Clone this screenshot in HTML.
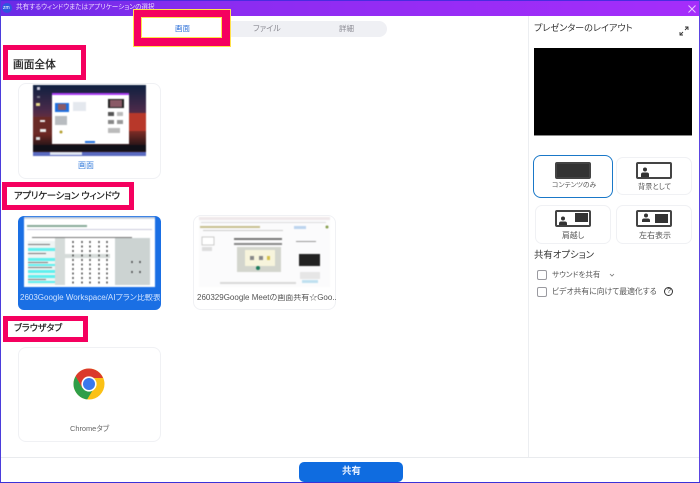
<!DOCTYPE html>
<html lang="ja"><head><meta charset="utf-8"><style>
*{box-sizing:border-box}
html,body{margin:0;padding:0}
body{width:700px;height:483px;position:relative;overflow:hidden;background:#fff;font-family:"Liberation Sans","Noto Sans CJK JP",sans-serif;color:#222;font-feature-settings:"palt" 1}
.a{position:absolute}
.t{position:absolute;white-space:nowrap;line-height:1}
.card{position:absolute;border:1px solid #f0f1f4;border-radius:8px;background:#fff}
.pink{position:absolute;border:5px solid #f5005f;background:#fff}
.lay{position:absolute;border:1px solid #f0f1f4;border-radius:7px;background:#fff}
.mon{position:absolute;width:36px;height:17px;border:2px solid #444;border-radius:2px;background:#fff}
.chk{position:absolute;left:537px;width:10px;height:10px;border:1px solid #9a9aa0;border-radius:2px;background:#fff}
.h{-webkit-text-stroke:.25px #222}
.b{filter:blur(.4px)}
</style></head><body>
<!-- title -->
<div class="a" style="left:0;top:0;width:700px;height:16px;background:linear-gradient(90deg,#6a2be6 0%,#8a2cf0 30%,#a52dfb 100%)"></div>
<div class="a" style="left:0;top:0;width:700px;height:1px;background:#4a2be0"></div>
<div class="a" style="left:2px;top:3px;width:10px;height:10px;border-radius:50%;background:#2d55e0"></div>
<div class="t" style="left:3px;top:6px;font-size:5px;color:#fff">zm</div>
<div class="t" style="left:16px;top:5px;font-size:6.6px;color:#ecdcff">共有するウィンドウまたはアプリケーションの選択</div>
<svg class="a" style="left:688px;top:5px" width="8" height="8"><path d="M.5 .5L7.5 7.5M7.5 .5L.5 7.5" stroke="#e9c8ff" stroke-width="1"/></svg>
<!-- frame -->
<div class="a" style="left:0;top:0;width:1px;height:483px;background:#4b3ddc"></div>
<div class="a" style="left:699px;top:0;width:1px;height:483px;background:#5b45e0"></div>
<div class="a" style="left:0;top:482px;width:700px;height:1px;background:#3a32d8"></div>
<!-- tabs -->
<div class="a" style="left:200px;top:21px;width:187px;height:16px;border-radius:8px;background:#eff0f4"></div>
<div class="t" style="left:253px;top:25px;font-size:8px;color:#8a8a92">ファイル</div>
<div class="t" style="left:339px;top:25px;font-size:7.5px;color:#8a8a92">詳細</div>
<div class="a" style="left:133px;top:9px;width:98px;height:38px;background:#f5005f;border:1px solid #ffe14a"></div>
<div class="a" style="left:141px;top:17px;width:81px;height:21px;background:#fff;border:1px solid #ffe14a"></div>
<div class="t" style="left:175px;top:25px;font-size:7.5px;color:#2f72d8">画面</div>
<!-- left/right divider -->
<div class="a" style="left:528px;top:16px;width:1px;height:442px;background:#eceef1"></div>
<!-- section 1 -->
<div class="pink" style="left:3px;top:45px;width:83px;height:35px"></div>
<div class="t h" style="left:13px;top:60px;font-size:10.7px;color:#222">画面全体</div>
<div class="card" style="left:18px;top:83px;width:143px;height:96px"></div>
<svg class="a b" style="left:33px;top:85px" width="113" height="71">
<defs><linearGradient id="g" x1="0" y1="0" x2="0" y2="1"><stop offset="0" stop-color="#0e2040"/><stop offset=".35" stop-color="#4a2a4a"/><stop offset=".62" stop-color="#8a3028"/><stop offset=".85" stop-color="#2a1518"/></linearGradient></defs>
<rect width="113" height="71" fill="url(#g)"/>
<rect x="96" y="28" width="17" height="18" fill="#b8382a"/>
<rect x="0" y="32" width="19" height="16" fill="#6a2a26"/>
<rect x="0" y="60" width="113" height="6" fill="#101018"/>
<rect x="0" y="67" width="113" height="4" fill="#5a6ac0"/>
<rect x="17" y="67" width="32" height="3" fill="#dfe6f2"/>
<rect x="4" y="2" width="3" height="3" fill="#ccd"/><rect x="4" y="11" width="3" height="2" fill="#778"/><rect x="3" y="18" width="4" height="3" fill="#e8d98a"/><rect x="7" y="35" width="5" height="2" fill="#eee"/><rect x="7" y="44" width="6" height="3" fill="#eee"/><rect x="3" y="52" width="4" height="3" fill="#ddd"/>
<rect x="19" y="8" width="77" height="51" fill="#fff"/><rect x="19" y="8" width="77" height="2" fill="#a83cf0"/>
<rect x="22" y="18" width="14" height="9" fill="#1f6fe0"/><rect x="25" y="19" width="8" height="6" fill="#8a5a66"/>
<rect x="40" y="17" width="13" height="9" fill="#e4e8ee"/>
<rect x="22" y="31" width="12" height="9" fill="#b8bcc0"/><circle cx="28" cy="47" r="1.5" fill="#b5a030"/>
<rect x="75" y="14" width="16" height="9" fill="#222"/><rect x="77" y="15" width="12" height="7" fill="#8a5a66"/>
<rect x="75" y="27" width="6" height="4" fill="#555"/><rect x="84" y="27" width="6" height="4" fill="#bbb"/><rect x="75" y="35" width="6" height="4" fill="#888"/><rect x="84" y="35" width="6" height="4" fill="#999"/><rect x="75" y="43" width="12" height="5" fill="#bbb"/>
<rect x="52" y="56" width="10" height="2" fill="#1f6fe0"/>
</svg>
<div class="t" style="left:78px;top:162px;font-size:8px;color:#3a7fdc">画面</div>
<!-- section 2 -->
<div class="pink" style="left:2px;top:182px;width:132px;height:28px"></div>
<div class="t h" style="left:14px;top:191px;font-size:9.4px;letter-spacing:-.25px;color:#222">アプリケーション ウィンドウ</div>
<div class="a" style="left:18px;top:216px;width:143px;height:94px;background:#1a6fe4;border-radius:6px"></div>
<svg class="a b" style="left:24px;top:217px" width="131" height="70">
<rect width="131" height="70" fill="#fff"/>
<rect width="131" height="2" fill="#cfd6e0"/><rect x="3" y="8" width="60" height="2" fill="#8a9"/><rect x="3" y="12" width="125" height="1" fill="#ccd"/>
<rect x="4" y="24" width="27" height="44" fill="#eef4f4"/>
<rect x="4" y="31" width="27" height="3" fill="#5ff0ee"/><rect x="4" y="41" width="27" height="3" fill="#5ff0ee"/><rect x="4" y="47" width="27" height="2" fill="#5ff0ee"/><rect x="4" y="53" width="27" height="3" fill="#5ff0ee"/><rect x="4" y="58" width="27" height="3" fill="#5ff0ee"/><rect x="4" y="64" width="27" height="2" fill="#5ff0ee"/>
<rect x="31" y="21" width="10" height="47" fill="#d5dbd9"/><rect x="41" y="37" width="45" height="4" fill="#d5dbd9"/>
<rect x="91" y="21" width="35" height="47" fill="#ccd3d2"/>
<g stroke="#333" stroke-width="1.3" stroke-dasharray="2 2.5"><path d="M49 24V67M58 24V67M66 24V67M75 24V67M83 24V67"/><path d="M108 44V48M116 44V48M108 54V58M116 54V58"/></g>
<g fill="#777"><rect x="8" y="20" width="100" height="1"/><rect x="4" y="27" width="22" height="1"/><rect x="4" y="36" width="18" height="1"/><rect x="4" y="45" width="20" height="1"/><rect x="4" y="50" width="24" height="1"/><rect x="4" y="62" width="18" height="1"/></g>
</svg>
<div class="t" style="left:20px;top:294px;font-size:8px;color:#cfe2ff;width:140px;overflow:hidden">2603Google Workspace/AIプラン比較表...</div>
<div class="card" style="left:193px;top:215px;width:143px;height:95px"></div>
<svg class="a b" style="left:199px;top:217px" width="131" height="70">
<rect width="131" height="70" fill="#fbfbfc"/>
<rect width="131" height="3" fill="#efe8ea"/><rect x="2" y="5" width="125" height="1" fill="#ddd"/>
<rect x="1" y="9" width="60" height="2" fill="#c8c090"/><rect x="95" y="9" width="12" height="3" fill="#bcd4ee"/><circle cx="128" cy="10" r="1.5" fill="#88a050"/>
<rect x="4" y="13" width="80" height="1" fill="#ccc"/>
<rect x="3" y="20" width="12" height="8" fill="#fff" stroke="#ccc"/><rect x="3" y="30" width="10" height="4" fill="#ddd"/>
<rect x="35" y="21" width="48" height="2" fill="#777"/><rect x="35" y="26" width="48" height="2" fill="#888"/>
<rect x="38" y="30" width="44" height="25" fill="#d3d5cd"/><rect x="46" y="33" width="30" height="16" fill="#f7f4dc"/>
<rect x="51" y="39" width="4" height="4" fill="#888"/><rect x="60" y="39" width="4" height="4" fill="#888"/><rect x="68" y="39" width="3" height="4" fill="#d4c04a"/>
<circle cx="59" cy="51" r="2" fill="#1a7a5a"/>
<rect x="100" y="37" width="21" height="12" fill="#222"/><rect x="97" y="24" width="20" height="1" fill="#999"/><rect x="101" y="55" width="20" height="7" fill="#e6e6e6"/><rect x="103" y="63" width="16" height="3" fill="#bfe0f0"/>
<rect x="21" y="65" width="76" height="2" fill="#d8d8d8"/>
</svg>
<div class="t" style="left:197px;top:294px;font-size:8px;color:#555;width:140px;overflow:hidden">260329Google Meetの画面共有☆Goo...</div>
<!-- section 3 -->
<div class="pink" style="left:3px;top:316px;width:85px;height:26px"></div>
<div class="t h" style="left:14px;top:324px;font-size:9px;color:#222">ブラウザタブ</div>
<div class="card" style="left:18px;top:347px;width:143px;height:95px"></div>
<svg class="a" style="left:73px;top:368px" width="32" height="32" viewBox="0 0 32 32">
<circle cx="16" cy="16" r="15.5" fill="#fbc116"/>
<path d="M16 .5A15.5 15.5 0 0 0 2.6 8.2L9.3 20 16 10H30A15.5 15.5 0 0 0 16 .5Z" fill="#db3a2d"/>
<path d="M2.6 8.2A15.5 15.5 0 0 0 14.2 31.4L21 20 9.3 20Z" fill="#2f9e48"/>
<circle cx="16" cy="16" r="7.6" fill="#fff"/><circle cx="16" cy="16" r="6" fill="#3a78ec"/>
</svg>
<div class="t" style="left:70px;top:425px;font-size:7.4px;color:#666">Chromeタブ</div>
<!-- bottom -->
<div class="a" style="left:1px;top:457px;width:698px;height:1px;background:#e9ebee"></div>
<div class="a" style="left:299px;top:462px;width:104px;height:20px;background:#0f6ce0;border-radius:5px"></div>
<div class="t" style="left:342px;top:467px;font-size:9.5px;font-weight:bold;color:#e8f1ff">共有</div>
<!-- right -->
<div class="t" style="left:534px;top:24px;font-size:9.1px;color:#333">プレゼンターのレイアウト</div>
<svg class="a" style="left:679px;top:26px" width="10" height="10"><path d="M1 9L4 6M6 4L9 1M6 1H9V4M1 6V9H4" fill="none" stroke="#333" stroke-width=".9"/></svg>
<div class="a" style="left:534px;top:48px;width:158px;height:88px;background:#000;border-bottom:1px solid #888"></div>
<div class="lay" style="left:533px;top:155px;width:80px;height:43px;border:1.5px solid #1a78c8;border-radius:8px"></div>
<div class="mon" style="left:555px;top:162px;background:#333"></div>
<div class="t" style="left:552px;top:183px;font-size:6.8px;color:#555">コンテンツのみ</div>
<div class="lay" style="left:616px;top:157px;width:76px;height:38px"></div>
<div class="mon" style="left:636px;top:162px"></div>
<svg class="a" style="left:640px;top:167px" width="10" height="10"><circle cx="5" cy="2.5" r="2" fill="#333"/><path d="M1 10V7.5Q1 5.5 3 5.5H7Q9 5.5 9 7.5V10Z" fill="#333"/></svg>
<div class="t" style="left:638px;top:183px;font-size:7.2px;color:#555">背景として</div>
<div class="lay" style="left:535px;top:205px;width:76px;height:39px"></div>
<div class="mon" style="left:555px;top:210px"></div>
<div class="a" style="left:575px;top:213px;width:13px;height:9px;background:#333"></div>
<svg class="a" style="left:558px;top:216px" width="10" height="10"><circle cx="5" cy="2.5" r="2" fill="#333"/><path d="M1 9V7.5Q1 5.5 3 5.5H7Q9 5.5 9 7.5V9Z" fill="#333"/></svg>
<div class="t" style="left:562px;top:232px;font-size:7.8px;color:#555">肩越し</div>
<div class="lay" style="left:616px;top:205px;width:76px;height:39px"></div>
<div class="mon" style="left:636px;top:210px"></div>
<div class="a" style="left:655px;top:214px;width:13px;height:9px;background:#333"></div>
<svg class="a" style="left:641px;top:213px" width="10" height="10"><circle cx="5" cy="2.5" r="2" fill="#333"/><path d="M1 9V7.5Q1 5.5 3 5.5H7Q9 5.5 9 7.5V9Z" fill="#333"/></svg>
<div class="t" style="left:639px;top:232px;font-size:8px;color:#555">左右表示</div>
<div class="t" style="left:534px;top:250px;font-size:9.4px;color:#333">共有オプション</div>
<div class="chk" style="top:270px"></div>
<div class="t" style="left:552px;top:271px;font-size:7.5px;color:#555">サウンドを共有</div>
<svg class="a" style="left:609px;top:273px" width="6" height="5"><path d="M1 1L3 3L5 1" fill="none" stroke="#777" stroke-width=".8"/></svg>
<div class="chk" style="top:287px"></div>
<div class="t" style="left:552px;top:288px;font-size:7.8px;color:#555">ビデオ共有に向けて最適化する</div>
<div class="a" style="left:664px;top:287px;width:9px;height:9px;border:1px solid #333;border-radius:50%"></div>
<div class="t" style="left:667px;top:288px;font-size:7px;color:#333">?</div>
</body></html>
